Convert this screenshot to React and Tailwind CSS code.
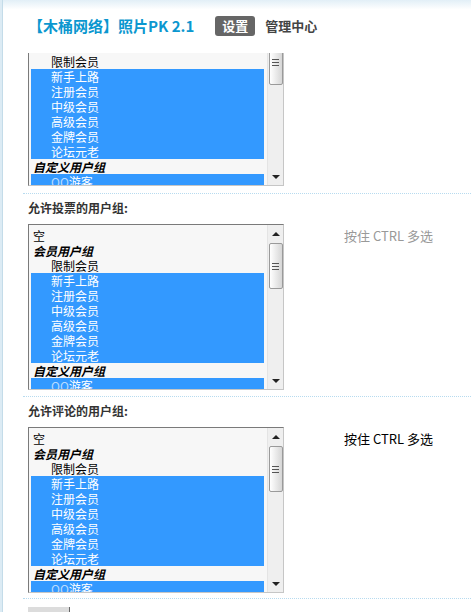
import React from "react";

const FONT = { fontFamily: '"Noto Sans CJK SC", "Liberation Sans", sans-serif' };

const ROWS = [
  { label: "空", kind: "plain" },
  { label: "会员用户组", kind: "group" },
  { label: "限制会员", kind: "option" },
  { label: "新手上路", kind: "option", selected: true },
  { label: "注册会员", kind: "option", selected: true },
  { label: "中级会员", kind: "option", selected: true },
  { label: "高级会员", kind: "option", selected: true },
  { label: "金牌会员", kind: "option", selected: true },
  { label: "论坛元老", kind: "option", selected: true },
  { label: "自定义用户组", kind: "group" },
  { label: "QQ游客", kind: "option", selected: true, qq: true },
];

function ScrollBar() {
  return (
    <div className="flex w-[16px] flex-col items-center border-l border-[#e4e4e4] bg-[#efefef]">
      <div className="flex h-[17px] items-center justify-center">
        <div className="h-0 w-0 border-x-[4px] border-b-[4px] border-x-transparent border-b-[#222]" />
      </div>
      <div className="mt-[1px] flex h-[46px] w-[14px] flex-col items-center justify-center gap-[2px] rounded-[2px] border border-[#9a9a9a] bg-gradient-to-r from-white to-[#d6d6d6]">
        <div className="h-px w-[7px] bg-[#555]" />
        <div className="h-px w-[7px] bg-[#555]" />
        <div className="h-px w-[7px] bg-[#555]" />
      </div>
      <div className="flex-1" />
      <div className="flex h-[17px] items-center justify-center">
        <div className="h-0 w-0 border-x-[4px] border-t-[4px] border-x-transparent border-t-[#222]" />
      </div>
    </div>
  );
}

// hidden: number of leading rows scrolled out of view (left blank)
function GroupSelect({ hidden = 0 }) {
  return (
    <div className="flex h-[166px] w-[256px] shrink-0 overflow-hidden border border-b-[#c6c6c6] border-l-[#7a7a7a] border-r-[#c6c6c6] border-t-[#7a7a7a] bg-[#f7f7f7]">
      <div className="flex-1 overflow-hidden pl-[2px] pr-[3px] pt-[3px]">
        {ROWS.map((row, i) => (
          <div
            key={row.label}
            className={`h-[15px] whitespace-nowrap text-[12px] leading-[15px] ${
              row.selected ? "bg-[#3399ff] text-white" : "text-black"
            } ${row.kind === "option" ? "pl-[20px]" : "pl-[2px]"} ${
              row.kind === "group" ? "font-bold italic text-[#222]" : ""
            }`}
          >
            {i < hidden ? null : row.qq ? (
              <>
                <span className="text-[#b8dcff]">QQ</span>游客
              </>
            ) : (
              row.label
            )}
          </div>
        ))}
      </div>
      <ScrollBar />
    </div>
  );
}

function SelectRow({ hintClass, hidden = 0 }) {
  return (
    <div className="flex">
      <GroupSelect hidden={hidden} />
      {hidden === 0 && (
        <div className={`ml-[60px] mt-[4px] text-[13px] leading-[16px] ${hintClass}`}>按住 CTRL 多选</div>
      )}
    </div>
  );
}

function Section({ title, hintClass }) {
  return (
    <div className="border-t border-dotted border-[#b7dbef]">
      <div className="pl-[5px]">
        <div className="mt-[6px] text-[12px] font-bold leading-[16px] text-[#333]">{title}:</div>
        <div className="mt-[8px]">
          <SelectRow hintClass={hintClass} />
        </div>
      </div>
    </div>
  );
}

export default function App() {
  return (
    <div className="flex h-[612px] w-[471px] overflow-hidden bg-white" style={FONT}>
      <div className="w-[3px] shrink-0 border-r border-[#c4dce9] bg-[#dcebf4]" />
      <div className="flex-1">
        <div className="h-[53px] bg-gradient-to-b from-[#e2eff7] to-white to-[18%] pl-[25px] pt-[16px]">
          <div className="flex h-[20px] items-center">
            <div className="text-[15px] font-bold text-[#0b97cf]">【木桶网络】照片PK 2.1</div>
            <div className="ml-[21px] flex h-[20px] w-[40px] items-center justify-center rounded-[3px] bg-[#666] text-[13px] font-bold text-white">
              设置
            </div>
            <div className="ml-[10px] text-[13px] font-bold text-[#444]">管理中心</div>
          </div>
        </div>
        <div className="pl-[20px]">
          <div className="mb-[7px] h-[133px] overflow-hidden pl-[5px]">
            <div className="-mt-[33px]">
              <SelectRow hintClass="text-[#999]" hidden={2} />
            </div>
          </div>
          <div className="mb-[6px]">
            <Section title="允许投票的用户组" hintClass="text-[#999]" />
          </div>
          <div className="mb-[5px]">
            <Section title="允许评论的用户组" hintClass="text-black" />
          </div>
          <div className="border-t border-dotted border-[#b7dbef] pl-[5px] pt-[8px]">
            <div className="h-[22px] w-[42px] border-r border-[#666] bg-[#dcdcdc]" />
          </div>
        </div>
      </div>
    </div>
  );
}
